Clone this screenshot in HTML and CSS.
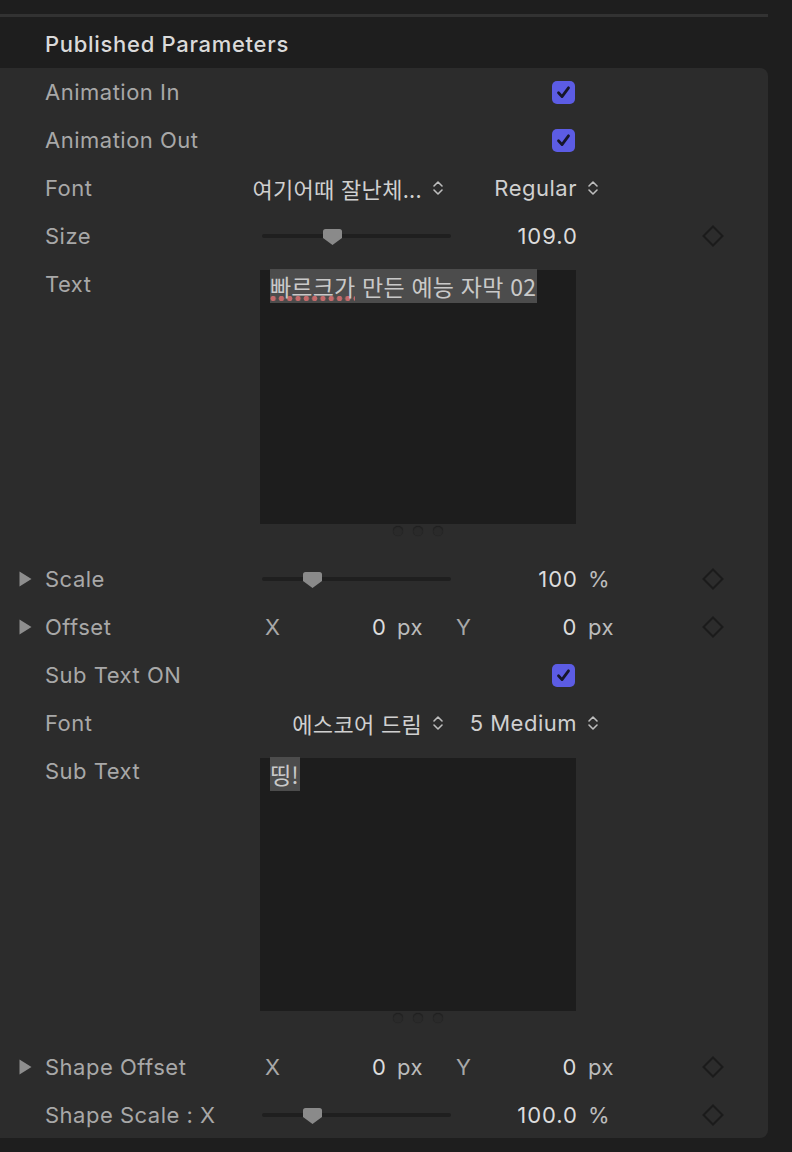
FILE: index.html
```html
<!DOCTYPE html>
<html lang="ko">
<head>
<meta charset="utf-8">
<title>Published Parameters</title>
<link rel="stylesheet" href="styles.css">
</head>
<body>
<div class="page">
  <div class="topline"></div>
  <div class="section-title">Published Parameters</div>
  <div class="panel">

    <div class="row">
      <div class="label">Animation In</div>
      <div class="check-cell"><span class="checkbox"><svg width="23" height="23" viewBox="0 0 23 23"><path d="M6.5 11.8 L10 15.6 L16.5 6.8" fill="none" stroke="#16162a" stroke-width="2.8" stroke-linecap="round" stroke-linejoin="round"/></svg></span></div>
    </div>

    <div class="row">
      <div class="label">Animation Out</div>
      <div class="check-cell"><span class="checkbox"><svg width="23" height="23" viewBox="0 0 23 23"><path d="M6.5 11.8 L10 15.6 L16.5 6.8" fill="none" stroke="#16162a" stroke-width="2.8" stroke-linecap="round" stroke-linejoin="round"/></svg></span></div>
    </div>

    <div class="row">
      <div class="label">Font</div>
      <div class="popup popup-family">
        <span class="popup-text">여기어때 잘난체...</span>
        <svg class="updown" width="12" height="20" viewBox="0 0 12 20"><path d="M2 8 L6 4 L10 8 M2 12 L6 16 L10 12" fill="none" stroke="#bdbdbd" stroke-width="1.6" stroke-linecap="round" stroke-linejoin="round"/></svg>
      </div>
      <div class="popup popup-style">
        <span class="popup-text">Regular</span>
        <svg class="updown" width="12" height="20" viewBox="0 0 12 20"><path d="M2 8 L6 4 L10 8 M2 12 L6 16 L10 12" fill="none" stroke="#bdbdbd" stroke-width="1.6" stroke-linecap="round" stroke-linejoin="round"/></svg>
      </div>
    </div>

    <div class="row">
      <div class="label">Size</div>
      <div class="slider">
        <div class="track"></div>
        <svg class="thumb" style="left:61px" width="19" height="16" viewBox="0 0 19 16"><path d="M2.5 0 H16.5 A2.5 2.5 0 0 1 19 2.5 V9 L9.5 16 L0 9 V2.5 A2.5 2.5 0 0 1 2.5 0 Z" fill="#8a8a8a"/></svg>
      </div>
      <div class="value">109.0</div>
      <div class="unit"></div>
      <svg class="diamond" width="22" height="22" viewBox="0 0 22 22"><path d="M11 1.5 L20.5 11 L11 20.5 L1.5 11 Z" fill="none" stroke="#1b1b1b" stroke-width="2"/></svg>
    </div>

    <div class="text-block">
      <div class="label">Text</div>
      <div class="text-area">
        <div class="text-box"><span class="sel"><span class="misspelled">빠르크가</span> 만든 예능 자막 02</span></div>
        <div class="grip"><span></span><span></span><span></span></div>
      </div>
    </div>

    <div class="row">
      <div class="label has-twisty"><span class="twisty"><svg width="13" height="16" viewBox="0 0 13 16"><path d="M0.5 0.5 L12.5 8 L0.5 15.5 Z" fill="#8e8e8e"/></svg></span>Scale</div>
      <div class="slider">
        <div class="track"></div>
        <svg class="thumb" style="left:41px" width="19" height="16" viewBox="0 0 19 16"><path d="M2.5 0 H16.5 A2.5 2.5 0 0 1 19 2.5 V9 L9.5 16 L0 9 V2.5 A2.5 2.5 0 0 1 2.5 0 Z" fill="#8a8a8a"/></svg>
      </div>
      <div class="value">100</div>
      <div class="unit">%</div>
      <svg class="diamond" width="22" height="22" viewBox="0 0 22 22"><path d="M11 1.5 L20.5 11 L11 20.5 L1.5 11 Z" fill="none" stroke="#1b1b1b" stroke-width="2"/></svg>
    </div>

    <div class="row">
      <div class="label has-twisty"><span class="twisty"><svg width="13" height="16" viewBox="0 0 13 16"><path d="M0.5 0.5 L12.5 8 L0.5 15.5 Z" fill="#8e8e8e"/></svg></span>Offset</div>
      <div class="xfield"><span class="axis">X</span><span class="num">0</span><span class="px">px</span></div>
      <div class="yfield"><span class="axis">Y</span><span class="num">0</span></div>
      <div class="unit">px</div>
      <svg class="diamond" width="22" height="22" viewBox="0 0 22 22"><path d="M11 1.5 L20.5 11 L11 20.5 L1.5 11 Z" fill="none" stroke="#1b1b1b" stroke-width="2"/></svg>
    </div>

    <div class="row">
      <div class="label">Sub Text ON</div>
      <div class="check-cell"><span class="checkbox"><svg width="23" height="23" viewBox="0 0 23 23"><path d="M6.5 11.8 L10 15.6 L16.5 6.8" fill="none" stroke="#16162a" stroke-width="2.8" stroke-linecap="round" stroke-linejoin="round"/></svg></span></div>
    </div>

    <div class="row">
      <div class="label">Font</div>
      <div class="popup popup-family">
        <span class="popup-text">에스코어 드림</span>
        <svg class="updown" width="12" height="20" viewBox="0 0 12 20"><path d="M2 8 L6 4 L10 8 M2 12 L6 16 L10 12" fill="none" stroke="#bdbdbd" stroke-width="1.6" stroke-linecap="round" stroke-linejoin="round"/></svg>
      </div>
      <div class="popup popup-style">
        <span class="popup-text">5 Medium</span>
        <svg class="updown" width="12" height="20" viewBox="0 0 12 20"><path d="M2 8 L6 4 L10 8 M2 12 L6 16 L10 12" fill="none" stroke="#bdbdbd" stroke-width="1.6" stroke-linecap="round" stroke-linejoin="round"/></svg>
      </div>
    </div>

    <div class="text-block text-block-sub">
      <div class="label">Sub Text</div>
      <div class="text-area">
        <div class="text-box"><span class="sel">띵!</span></div>
        <div class="grip"><span></span><span></span><span></span></div>
      </div>
    </div>

    <div class="row">
      <div class="label has-twisty"><span class="twisty"><svg width="13" height="16" viewBox="0 0 13 16"><path d="M0.5 0.5 L12.5 8 L0.5 15.5 Z" fill="#8e8e8e"/></svg></span>Shape Offset</div>
      <div class="xfield"><span class="axis">X</span><span class="num">0</span><span class="px">px</span></div>
      <div class="yfield"><span class="axis">Y</span><span class="num">0</span></div>
      <div class="unit">px</div>
      <svg class="diamond" width="22" height="22" viewBox="0 0 22 22"><path d="M11 1.5 L20.5 11 L11 20.5 L1.5 11 Z" fill="none" stroke="#1b1b1b" stroke-width="2"/></svg>
    </div>

    <div class="row">
      <div class="label">Shape Scale : X</div>
      <div class="slider">
        <div class="track"></div>
        <svg class="thumb" style="left:41px" width="19" height="16" viewBox="0 0 19 16"><path d="M2.5 0 H16.5 A2.5 2.5 0 0 1 19 2.5 V9 L9.5 16 L0 9 V2.5 A2.5 2.5 0 0 1 2.5 0 Z" fill="#8a8a8a"/></svg>
      </div>
      <div class="value">100.0</div>
      <div class="unit">%</div>
      <svg class="diamond" width="22" height="22" viewBox="0 0 22 22"><path d="M11 1.5 L20.5 11 L11 20.5 L1.5 11 Z" fill="none" stroke="#1b1b1b" stroke-width="2"/></svg>
    </div>

  </div>
</div>
</body>
</html>
```

FILE: styles.css
```css
* { box-sizing: border-box; }

html, body {
  margin: 0;
  padding: 0;
  background: #1e1e1e;
}

body {
  width: 792px;
  height: 1152px;
  overflow: hidden;
  font-family: Inter, "Noto Sans CJK KR", "Noto Sans", sans-serif;
  font-size: 22px;
  letter-spacing: 0.5px;
  color: #a8a8a8;
}

.page {
  padding-top: 14px;
  width: 768px;
}

.topline {
  height: 3px;
  background: #323232;
}

.section-title {
  height: 51px;
  padding-left: 45px;
  padding-top: 4px;
  line-height: 47px;
  font-weight: 500;
  letter-spacing: 0.7px;
  color: #dadada;
}

.panel {
  background: #2c2c2c;
  border-radius: 0 8px 8px 0;
  height: 1070px;
}

.row {
  display: grid;
  grid-template-columns: 260px 196px 121px 125px 22px;
  align-items: center;
  height: 48px;
}

.label {
  padding-left: 45px;
  white-space: nowrap;
  color: #a8a8a8;
  display: flex;
  align-items: center;
}

.label.has-twisty { padding-left: 0; }

.twisty {
  width: 45px;
  padding-left: 19px;
  display: flex;
  align-items: center;
}

.twisty svg { display: block; }

.check-cell {
  grid-column: 2 / span 3;
  padding-left: 292px;
  display: flex;
  align-items: center;
}

.checkbox {
  width: 23px;
  height: 23px;
  border-radius: 5px;
  background: #5c5ce4;
  display: block;
}

.checkbox svg { display: block; }

.popup {
  display: flex;
  align-items: center;
  justify-content: flex-end;
  gap: 10px;
  color: #d0d0d0;
  white-space: nowrap;
}

.popup-family {
  grid-column: 2;
  width: 184px;
  font-family: "Noto Sans CJK KR", Inter, sans-serif;
  letter-spacing: 0.3px;
}

.popup-style {
  grid-column: 3 / span 2;
  width: 143px;
}

.updown { display: block; flex: none; }

.slider {
  position: relative;
  margin-left: 2px;
  width: 189px;
  height: 16px;
}

.track {
  margin-top: 6px;
  height: 4px;
  border-radius: 2px;
  background: #1f1f1f;
}

.thumb {
  position: absolute;
  top: 1px;
  display: block;
}

.value {
  text-align: right;
  color: #dcdcdc;
  letter-spacing: 1px;
  margin-right: -1px;
}

.unit {
  padding-left: 11px;
  color: #bcbcbc;
}

.diamond {
  grid-column: 5;
  display: block;
}

.xfield {
  display: flex;
  align-items: center;
  padding-left: 5px;
}

.xfield .axis { width: 107px; }
.xfield .num { width: 13px; text-align: right; color: #dcdcdc; }
.xfield .px { margin-left: 12px; color: #bcbcbc; }

.yfield {
  display: flex;
  align-items: center;
  justify-content: space-between;
}

.yfield .num { color: #dcdcdc; }

.text-block {
  display: grid;
  grid-template-columns: 260px 316px;
  height: 295px;
}

.text-block .label {
  align-self: start;
  height: 48px;
}

.text-area {
  padding-top: 10px;
}

.text-block-sub { height: 296px; }
.text-block-sub .text-area { padding-top: 11px; }
.text-block-sub .text-box { height: 253px; }

.text-box {
  height: 254px;
  width: 316px;
  background: #1d1d1d;
  padding: 1px 0 0 10px;
  font-family: "Noto Sans CJK KR", Inter, sans-serif;
  font-size: 23px;
  letter-spacing: 0.2px;
  line-height: 31px;
  color: #c9c9c9;
}

.sel {
  background: #4c4c4c;
  padding-right: 1px;
}

.misspelled {
  background-image: radial-gradient(circle, #c46a6a 2.4px, transparent 3px);
  background-size: 8.3px 7px;
  background-repeat: repeat-x;
  background-position: -1px 26px;
  padding-bottom: 4px;
}

.grip {
  display: flex;
  justify-content: center;
  gap: 10px;
  padding-top: 2px;
}

.grip span {
  width: 10px;
  height: 10px;
  border-radius: 50%;
  background: #2a2a2a;
  box-shadow: inset 0 1px 1px rgba(0,0,0,0.25), 0 0 1px rgba(0,0,0,0.3);
}
```
